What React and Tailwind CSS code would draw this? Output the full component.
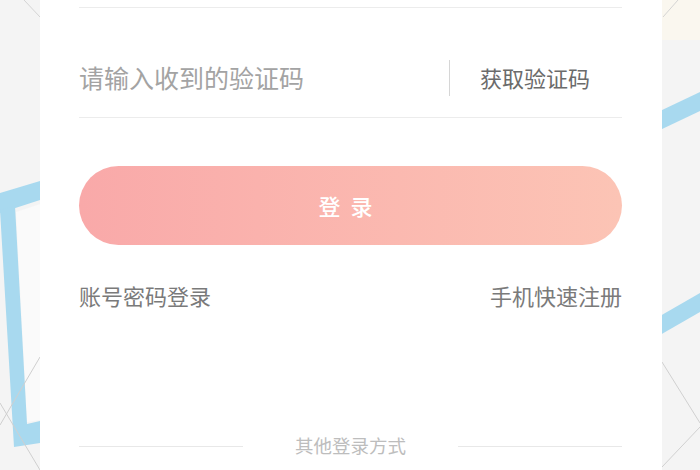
export default function App() {
  return (
    <div
      className="relative w-[700px] h-[470px] overflow-hidden bg-[#f4f4f4] flex"
      style={{ fontFamily: '"Noto Sans CJK SC", "Noto Sans", sans-serif' }}
    >
      {/* background decoration */}
      <svg className="absolute inset-0" width="700" height="470" viewBox="0 0 700 470">
        <polygon points="16,212 40,204 40,420 27,422" fill="#fafafa" />
        <polygon points="0,193 40,181 40,200 0,213" fill="#a8d9ef" />
        <polygon points="0,210 15,206 27,424 40,421 40,443 14,447" fill="#a8d9ef" />
        <line x1="0" y1="425" x2="40" y2="357" stroke="#cfcfcf" strokeWidth="1" />
        <line x1="0" y1="403" x2="40" y2="470" stroke="#cfcfcf" strokeWidth="1" />
        <line x1="24" y1="0" x2="40" y2="17" stroke="#d4d4d4" strokeWidth="1" />
        <rect x="660" y="0" width="40" height="40" fill="#faf7ef" />
        <polygon points="660,111 700,92 700,111 660,130" fill="#a8d9ef" />
        <polygon points="660,316 700,293 700,312 660,335" fill="#a8d9ef" />
        <line x1="662" y1="362" x2="700" y2="423" stroke="#d0d0d0" strokeWidth="1" />
        <line x1="700" y1="427" x2="662" y2="467" stroke="#d0d0d0" strokeWidth="1" />
        <line x1="663" y1="17" x2="678" y2="0" stroke="#d4d4d4" strokeWidth="1" />
      </svg>

      <div className="w-[40px] shrink-0" />

      {/* login card */}
      <div className="relative w-[622px] h-full bg-white pl-[39px] pr-[40px] flex flex-col">
        <div className="h-[8px] border-b border-[#ececec]" />

        <div className="h-[110px] pt-[30px] flex items-center border-b border-[#ececec]">
          <span className="flex-1 text-[25px] text-[#a3a3a3]">请输入收到的验证码</span>
          <div className="w-px h-[36px] bg-[#d6d6d6] mr-[30px]" />
          <span className="text-[22px] text-[#6b6b6b] pr-[32px]">获取验证码</span>
        </div>

        <button
          type="button"
          className="mt-[48px] h-[79px] w-full rounded-full bg-gradient-to-r from-[#f9a9a9] to-[#fcc4b5] text-white text-[22px] font-medium tracking-[10px]"
        >
          登录
        </button>

        <div className="mt-[34px] flex items-center justify-between text-[22px] text-[#7a7a7a]">
          <span>账号密码登录</span>
          <span>手机快速注册</span>
        </div>

        <div className="mt-auto mb-[10px] flex items-center gap-[52px]">
          <div className="flex-1 h-px bg-[#e8e8e8]" />
          <span className="text-[18.5px] text-[#bdbdbd]">其他登录方式</span>
          <div className="flex-1 h-px bg-[#e8e8e8]" />
        </div>
      </div>

      <div className="flex-1" />
    </div>
  );
}
